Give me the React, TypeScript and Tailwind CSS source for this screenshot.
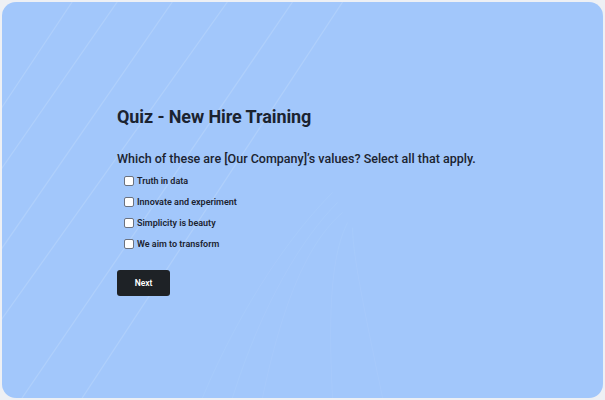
import React from "react";

const options = [
  "Truth in data",
  "Innovate and experiment",
  "Simplicity is beauty",
  "We aim to transform",
];

function Backdrop() {
  // Faint light streaks across the card background
  return (
    <svg
      className="pointer-events-none absolute inset-0 h-full w-full"
      viewBox="0 0 600 395"
      preserveAspectRatio="none"
    >
      <g stroke="#ffffff" strokeWidth="1.2" fill="none" opacity="0.14">
        <line x1="-10" y1="120" x2="70" y2="0" />
        <line x1="-10" y1="180" x2="115" y2="0" />
        <line x1="-10" y1="260" x2="170" y2="0" />
        <line x1="-10" y1="330" x2="225" y2="0" />
        <line x1="20" y1="395" x2="290" y2="0" />
        <line x1="80" y1="395" x2="340" y2="0" />
      </g>
      <g stroke="#ffffff" strokeWidth="0.7" fill="none" opacity="0.07">
        <path d="M200 395 C 240 300, 290 230, 330 190" />
        <path d="M230 395 C 260 300, 300 235, 335 200" />
        <path d="M260 395 C 280 300, 305 240, 340 210" />
        <path d="M330 395 C 325 300, 330 250, 345 220" />
        <path d="M380 395 C 360 300, 350 250, 350 225" />
      </g>
    </svg>
  );
}

export default function App() {
  return (
    <div
      className="h-[400px] w-[605px] bg-[#eef0f4] p-[2px]"
      style={{ fontFamily: "Roboto, 'Liberation Sans', sans-serif" }}
    >
      <div className="relative h-[396px] w-[601px] overflow-hidden rounded-[14px] bg-[#a2c7fb]">
        <Backdrop />
        <div className="relative flex flex-col pl-[115px] pt-[103px] text-[#1b2330]">
          <h1 className="text-[18px] font-bold leading-[24px] tracking-[-0.1px]">
            Quiz - New Hire Training
          </h1>
          <p className="mt-[21px] text-[12.5px] font-medium leading-[18px]">
            Which of these are [Our Company]’s values? Select all that apply.
          </p>
          <div className="mt-[7px] flex flex-col gap-[9px] pl-[7px]">
            {options.map((o) => (
              <label key={o} className="flex h-[12px] items-center gap-[3px]">
                <span className="h-[10px] w-[10px] rounded-[2px] border border-[#6b7280] bg-white" />
                <span className="text-[9px] font-semibold leading-[12px]">{o}</span>
              </label>
            ))}
          </div>
          <button className="mt-[20px] flex h-[26px] w-[53px] items-center justify-center rounded-[3px] bg-[#1e2226] text-[8.5px] font-semibold text-white">
            Next
          </button>
        </div>
      </div>
    </div>
  );
}
